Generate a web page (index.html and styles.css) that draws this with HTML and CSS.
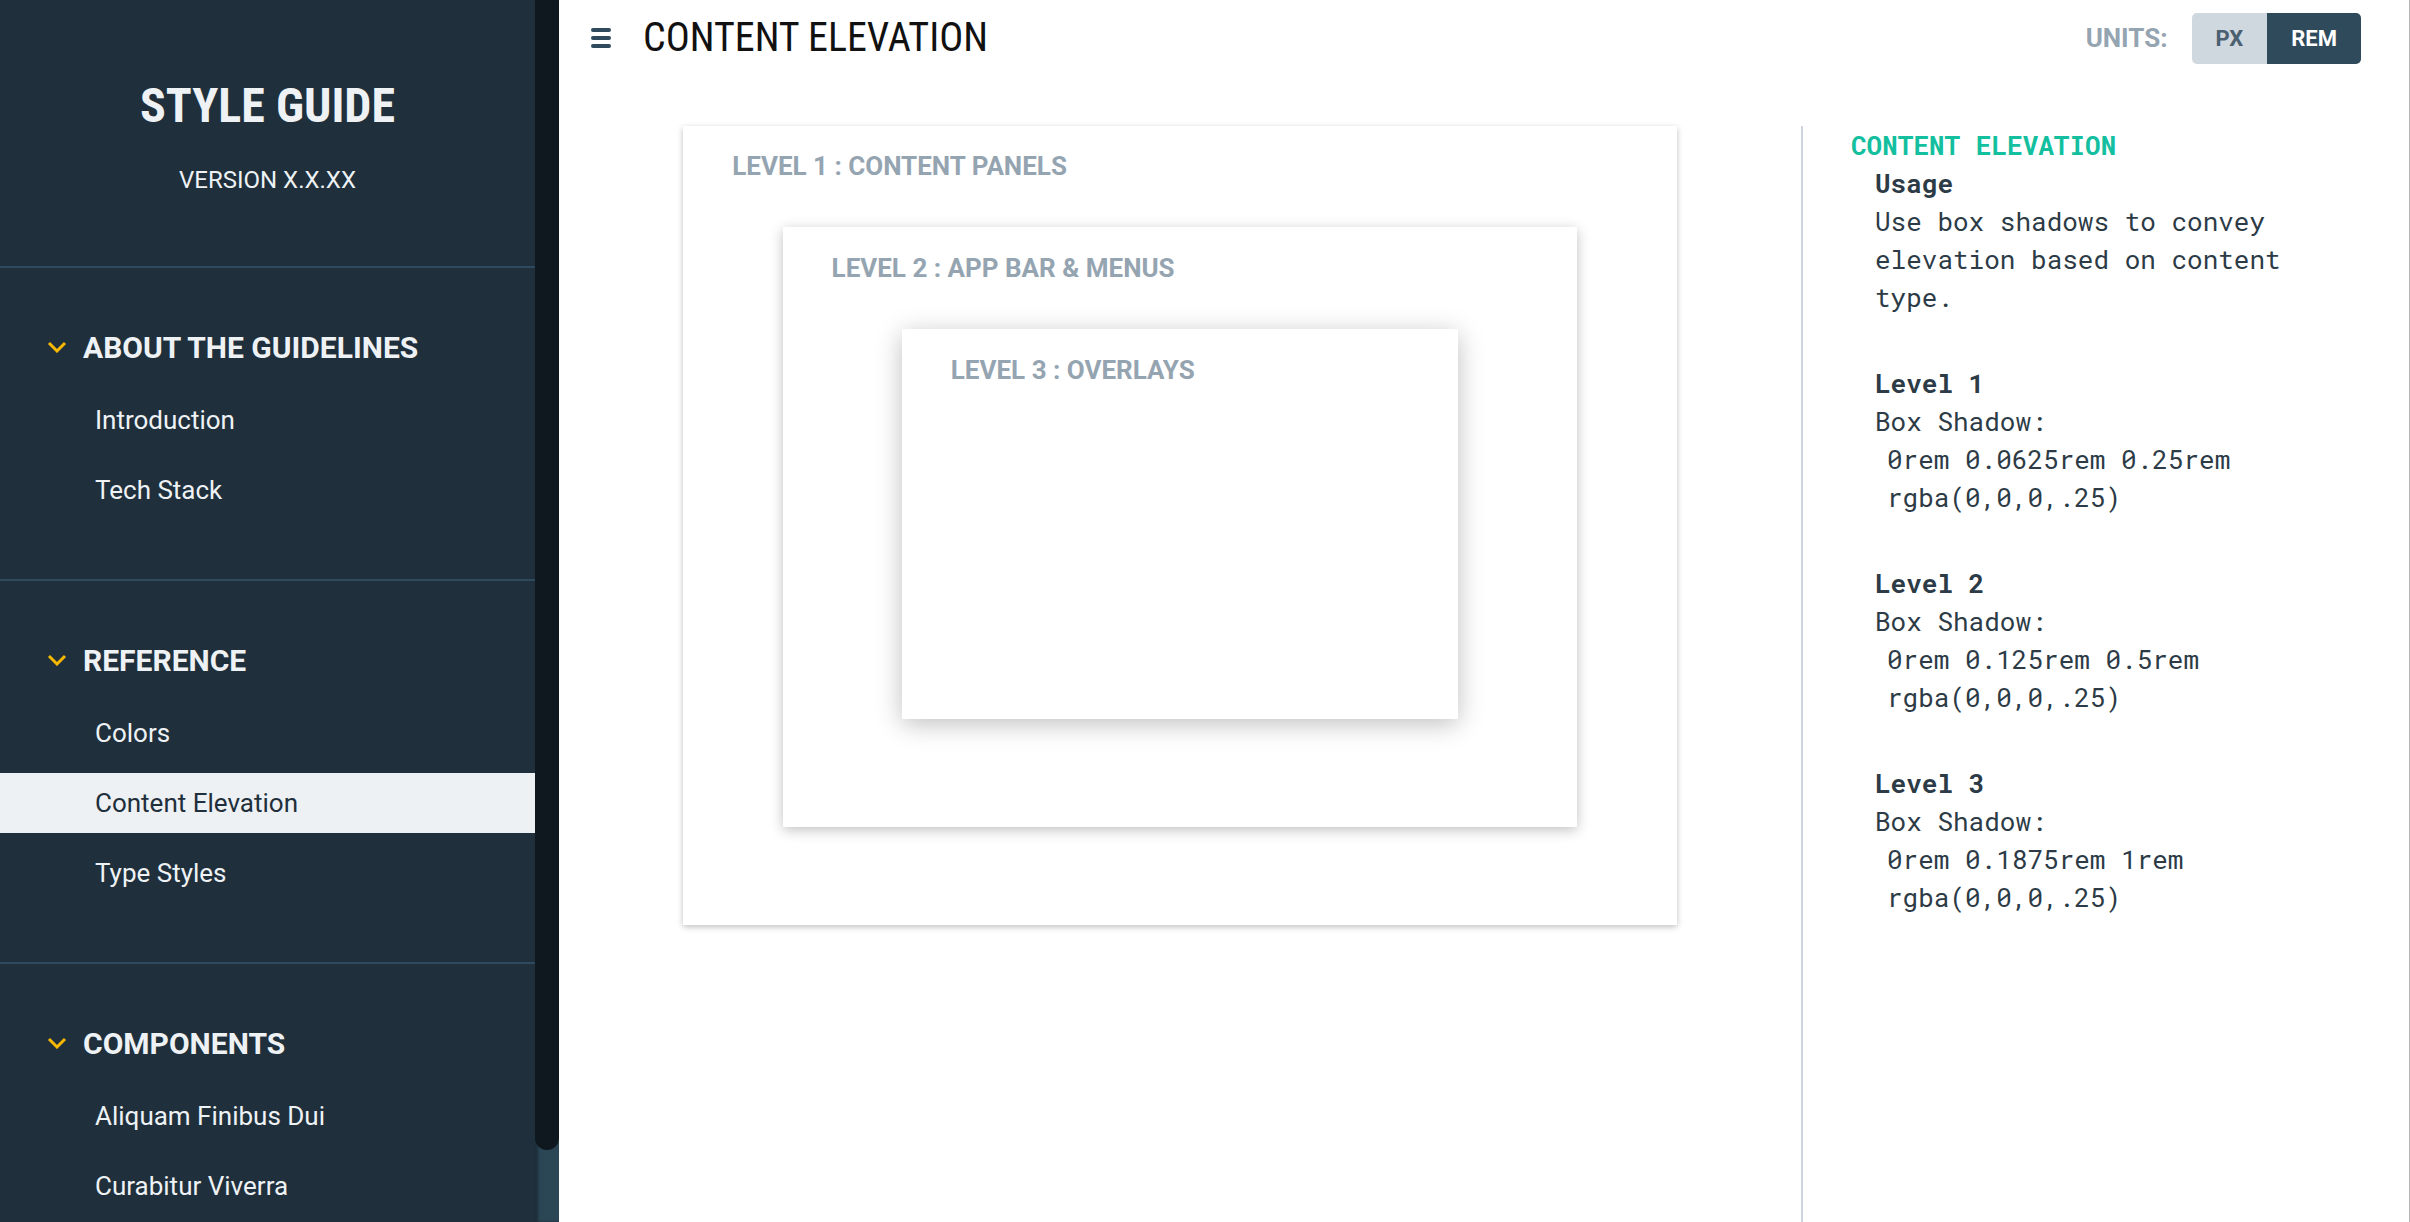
FILE: index.html
```html
<!DOCTYPE html>
<html lang="en">
<head>
<meta charset="utf-8">
<title>Style Guide - Content Elevation</title>
<link rel="stylesheet" href="styles.css">
</head>
<body>
<div class="app">
  <aside class="sidebar">
    <nav class="nav">
      <div class="brand">
        <h1 class="brand-title">STYLE GUIDE</h1>
        <div class="brand-version">VERSION X.X.XX</div>
      </div>
      <section class="nav-section">
        <div class="nav-heading">
          <svg class="chev" viewBox="0 0 20 12" width="20" height="12"><path d="M2 2 L10 10 L18 2" fill="none" stroke="currentColor" stroke-width="3"/></svg>
          <span>ABOUT THE GUIDELINES</span>
        </div>
        <ul class="nav-list">
          <li class="nav-item">Introduction</li>
          <li class="nav-item">Tech Stack</li>
        </ul>
      </section>
      <section class="nav-section">
        <div class="nav-heading">
          <svg class="chev" viewBox="0 0 20 12" width="20" height="12"><path d="M2 2 L10 10 L18 2" fill="none" stroke="currentColor" stroke-width="3"/></svg>
          <span>REFERENCE</span>
        </div>
        <ul class="nav-list">
          <li class="nav-item">Colors</li>
          <li class="nav-item active">Content Elevation</li>
          <li class="nav-item">Type Styles</li>
        </ul>
      </section>
      <section class="nav-section">
        <div class="nav-heading">
          <svg class="chev" viewBox="0 0 20 12" width="20" height="12"><path d="M2 2 L10 10 L18 2" fill="none" stroke="currentColor" stroke-width="3"/></svg>
          <span>COMPONENTS</span>
        </div>
        <ul class="nav-list">
          <li class="nav-item">Aliquam Finibus Dui</li>
          <li class="nav-item">Curabitur Viverra</li>
        </ul>
      </section>
    </nav>
    <div class="scrollbar"><div class="thumb"></div></div>
  </aside>

  <main class="main">
    <header class="topbar">
      <button class="menu" aria-label="Menu"><span></span><span></span><span></span></button>
      <h2 class="page-title">CONTENT ELEVATION</h2>
      <div class="units">
        <span class="units-label">UNITS:</span>
        <div class="toggle">
          <span class="opt">PX</span>
          <span class="opt on">REM</span>
        </div>
      </div>
    </header>

    <div class="content">
      <div class="demo">
        <div class="level level1">
          <div class="level-label">LEVEL 1 : CONTENT PANELS</div>
          <div class="level level2">
            <div class="level-label">LEVEL 2 : APP BAR &amp; MENUS</div>
            <div class="level level3">
              <div class="level-label">LEVEL 3 : OVERLAYS</div>
            </div>
          </div>
        </div>
      </div>

      <aside class="notes">
        <div class="notes-title">CONTENT ELEVATION</div>
        <div class="note">
          <div class="note-head">Usage</div>
          <p class="note-text">Use box shadows to convey elevation based on content type.</p>
        </div>
        <div class="note">
          <div class="note-head">Level 1</div>
          <div class="note-text">Box Shadow:</div>
          <div class="note-val">0rem 0.0625rem 0.25rem</div>
          <div class="note-val">rgba(0,0,0,.25)</div>
        </div>
        <div class="note">
          <div class="note-head">Level 2</div>
          <div class="note-text">Box Shadow:</div>
          <div class="note-val">0rem 0.125rem 0.5rem</div>
          <div class="note-val">rgba(0,0,0,.25)</div>
        </div>
        <div class="note">
          <div class="note-head">Level 3</div>
          <div class="note-text">Box Shadow:</div>
          <div class="note-val">0rem 0.1875rem 1rem</div>
          <div class="note-val">rgba(0,0,0,.25)</div>
        </div>
      </aside>
    </div>
  </main>
</div>
</body>
</html>
```

FILE: styles.css
```css
* { box-sizing: border-box; }

html, body {
  margin: 0;
  padding: 0;
  height: 100%;
}

body {
  font-family: Roboto, "Liberation Sans", sans-serif;
  background: #ffffff;
  overflow: hidden;
}

.app {
  display: flex;
  height: 100vh;
}

/* ---------- Sidebar ---------- */
.sidebar {
  flex: 0 0 559px;
  display: flex;
  background: #1f2f3b;
  overflow: hidden;
}

.nav {
  flex: 0 0 535px;
  color: #eef2f5;
}

.brand {
  height: 266px;
  padding-top: 78px;
  text-align: center;
}

.brand-title {
  margin: 0;
  font-family: "Roboto Condensed", "DejaVu Sans Condensed", Roboto, sans-serif;
  font-weight: 700;
  font-size: 48px;
  line-height: 56px;
  color: #eef2f5;
}

.brand-version {
  margin-top: 31px;
  font-size: 24px;
  line-height: 30px;
  color: #eef2f5;
}

.nav-section {
  border-top: 2px solid #2f4a5d;
  padding: 59px 0 49px;
}

.nav-heading {
  display: flex;
  align-items: center;
  gap: 16px;
  height: 40px;
  padding-left: 47px;
  margin-bottom: 23px;
  font-size: 30px;
  font-weight: 700;
  color: #eef2f5;
}

.chev {
  color: #f5b700;
  flex: 0 0 auto;
}

.nav-list {
  list-style: none;
  margin: 0;
  padding: 0;
}

.nav-item {
  height: 60px;
  line-height: 60px;
  margin-bottom: 10px;
  padding-left: 95px;
  font-size: 26px;
  color: #eef2f5;
}

.nav-item.active {
  background: #edf1f4;
  color: #1f2f3b;
}

.scrollbar {
  flex: 0 0 24px;
  background: #2b4655;
  box-shadow: inset 3px 0 3px rgba(0, 0, 0, 0.35);
}

.thumb {
  height: 1150px;
  background: #0f181e;
  border-radius: 0 0 12px 12px;
}

/* ---------- Main ---------- */
.main {
  flex: 1 1 auto;
  min-width: 0;
  display: flex;
  flex-direction: column;
  border-right: 1px solid #b4b4b4;
}

.topbar {
  height: 76px;
  display: flex;
  align-items: center;
  padding: 0 48px 0 32px;
}

.menu {
  display: flex;
  flex-direction: column;
  gap: 4px;
  width: 20px;
  padding: 0;
  margin: 0 32px 0 0;
  border: 0;
  background: none;
}

.menu span {
  display: block;
  height: 4px;
  border-radius: 2px;
  background: #2f4b5c;
}

.page-title {
  margin: 0;
  flex: 1 1 auto;
  font-family: "Roboto Condensed", "DejaVu Sans Condensed", Roboto, sans-serif;
  font-weight: 400;
  font-size: 40px;
  line-height: 48px;
  color: #111111;
}

.units {
  display: flex;
  align-items: center;
  gap: 24px;
}

.units-label {
  font-size: 26px;
  font-weight: 700;
  color: #95a4b1;
}

.toggle {
  display: flex;
  height: 51px;
  border-radius: 5px;
  overflow: hidden;
}

.opt {
  display: flex;
  align-items: center;
  padding: 0 24px;
  font-size: 22px;
  font-weight: 700;
  background: #cfd8de;
  color: #4b6070;
}

.opt.on {
  background: #2e4a5b;
  color: #ffffff;
}

.content {
  flex: 1 1 auto;
  display: flex;
  padding-top: 50px;
}

.demo {
  flex: 0 0 1242px;
}

.level {
  background: #ffffff;
  margin: 0 auto;
}

.level-label {
  padding-left: 49px;
  font-size: 26px;
  line-height: 30px;
  font-weight: 700;
  color: #95a4b1;
  margin-bottom: 46px;
}

.level1 {
  width: 80%;
  padding: 25px 0 98px;
  box-shadow: 0 1.5px 6px rgba(0, 0, 0, 0.25);
}

.level2 {
  width: 80%;
  padding: 26px 0 108px;
  box-shadow: 0 3px 12px rgba(0, 0, 0, 0.25);
}

.level3 {
  width: 70%;
  height: 390px;
  padding-top: 26px;
  box-shadow: 0 4.5px 24px rgba(0, 0, 0, 0.25);
}

/* ---------- Notes ---------- */
.notes {
  flex: 1 1 auto;
  border-left: 2px solid #cdd6de;
  padding: 0 80px 0 48px;
  font-family: "Roboto Mono", "DejaVu Sans Mono", "Liberation Mono", monospace;
  font-size: 26px;
  line-height: 38px;
  color: #2c3b46;
}

.notes-title {
  font-weight: 700;
  color: #13bf9f;
}

.note {
  padding-left: 24px;
}

.note + .note {
  margin-top: 48px;
}

.note-head {
  font-weight: 700;
}

.note-text {
  margin: 0;
}

.note-val {
  padding-left: 12px;
}
```
